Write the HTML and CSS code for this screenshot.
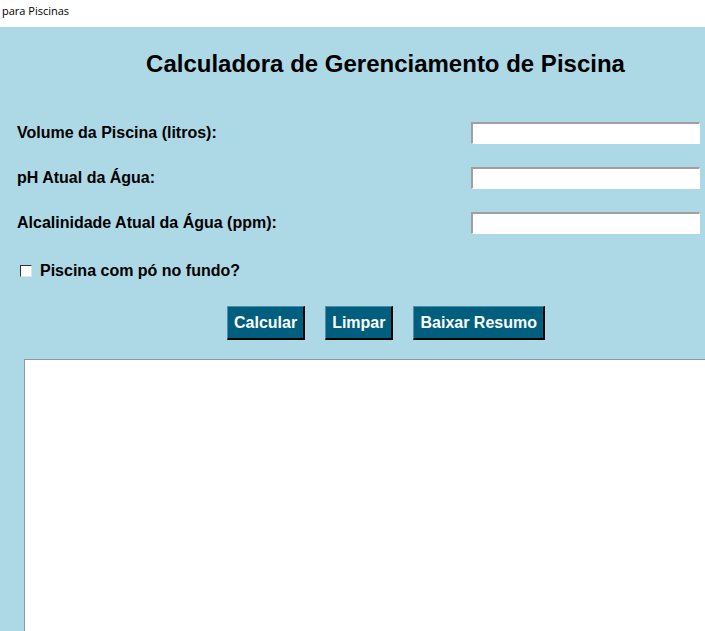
FILE: index.html
```html
<!DOCTYPE html>
<html lang="pt">
<head>
<meta charset="utf-8">
<title>Calculadora para Piscinas</title>
<link rel="stylesheet" href="styles.css">
</head>
<body>
<div class="titlebar">para Piscinas</div>
<div class="app">
  <h1 class="title">Calculadora de Gerenciamento de Piscina</h1>
  <div class="form">
    <label class="label">Volume da Piscina (litros):</label>
    <input class="entry" type="text">
    <label class="label">pH Atual da Água:</label>
    <input class="entry" type="text">
    <label class="label">Alcalinidade Atual da Água (ppm):</label>
    <input class="entry" type="text">
  </div>
  <div class="check-row">
    <span class="checkbox"></span>
    <span class="check-label">Piscina com pó no fundo?</span>
  </div>
  <div class="buttons">
    <button class="btn">Calcular</button>
    <button class="btn">Limpar</button>
    <button class="btn">Baixar Resumo</button>
  </div>
  <div class="output"></div>
</div>
</body>
</html>
```
FILE: styles.css
```css
html, body {
  margin: 0;
  padding: 0;
  width: 705px;
  height: 631px;
  overflow: hidden;
  background: #ffffff;
}
body {
  font-family: "Liberation Sans", Arial, sans-serif;
}
.titlebar {
  height: 27px;
  box-sizing: border-box;
  padding: 3px 0 0 2px;
  font-family: "Open Sans", "Noto Sans", sans-serif;
  font-size: 11px;
  color: #000;
  background: #ffffff;
}
.app {
  width: 771px;
  height: 604px;
  background: #add8e6;
  display: flex;
  flex-direction: column;
}
.title {
  margin: 0;
  padding-top: 23px;
  text-align: center;
  font-size: 24px;
  font-weight: bold;
  line-height: 28px;
  color: #000;
}
.form {
  margin-top: 44px;
  display: grid;
  grid-template-columns: 454px 229px;
  row-gap: 23px;
  padding-left: 17px;
  align-items: center;
}
.label {
  font-size: 16px;
  line-height: 22px;
  font-weight: bold;
  color: #000;
}
.entry {
  width: 229px;
  height: 22px;
  box-sizing: border-box;
  margin: 0;
  padding: 0;
  border: 1px solid;
  border-color: #a0a0a0 #ffffff #ffffff #a0a0a0;
  border-top-width: 2px;
  border-left-width: 2px;
  background: #ffffff;
  outline: none;
}
.check-row {
  margin-top: 26px;
  display: flex;
  align-items: center;
  gap: 8px;
  padding-left: 20px;
  height: 22px;
}
.checkbox {
  width: 12px;
  height: 12px;
  box-sizing: border-box;
  background: #ffffff;
  border: 1px solid;
  border-color: #333 #e3e3e3 #e3e3e3 #333;
}
.check-label {
  font-size: 16px;
  font-weight: bold;
  color: #000;
}
.buttons {
  margin-top: 24px;
  padding-left: 227px;
  display: flex;
  gap: 20px;
}
.btn {
  height: 34px;
  margin: 0;
  padding: 0 6px;
  box-sizing: border-box;
  background: #005f7f;
  color: #ffffff;
  font-family: "Liberation Sans", Arial, sans-serif;
  font-size: 16px;
  font-weight: bold;
  border: 1px solid;
  border-color: #4f8fa6 #000000 #000000 #4f8fa6;
  border-width: 1px 2px 2px 1px;
}
.output {
  margin-top: 19px;
  margin-left: 24px;
  flex: 1;
  background: #ffffff;
  border-top: 1px solid #8a9aa0;
  border-left: 1px solid #8a9aa0;
}
```
